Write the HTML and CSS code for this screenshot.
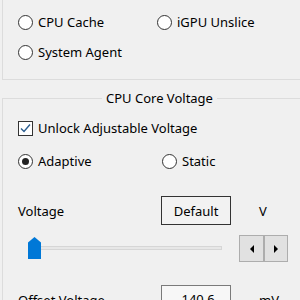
FILE: index.html
```html
<!DOCTYPE html>
<html lang="en">
<head>
    <meta charset="UTF-8">
    <title>Voltage Settings</title>
    <link rel="stylesheet" href="styles.css">
</head>
<body>
    <div class="group group-top">
        <div class="opt-grid">
            <label class="opt"><span class="radio"></span>CPU Cache</label>
            <label class="opt"><span class="radio"></span>iGPU Unslice</label>
            <label class="opt"><span class="radio"></span>System Agent</label>
        </div>
    </div>

    <div class="group group-main">
        <div class="legend">CPU Core Voltage</div>
        <label class="opt check-row">
            <span class="check">
                <svg width="13" height="13" viewBox="0 0 13 13"><path d="M2 6.5 L5 9.5 L11 2.5" fill="none" stroke="#2a5d8f" stroke-width="1.4"/></svg>
            </span>Unlock Adjustable Voltage
        </label>
        <div class="mode-row">
            <label class="opt"><span class="radio on"></span>Adaptive</label>
            <label class="opt"><span class="radio"></span>Static</label>
        </div>
        <div class="field-row">
            <span class="field-label">Voltage</span>
            <button class="btn">Default</button>
            <span class="unit">V</span>
        </div>
        <div class="slider-row">
            <div class="slider">
                <div class="track"></div>
                <div class="thumb"></div>
            </div>
            <div class="spin">
                <span class="spin-btn"><span class="tri tri-left"></span></span>
                <span class="spin-btn"><span class="tri tri-right"></span></span>
            </div>
        </div>
        <div class="field-row offset-row">
            <span class="field-label">Offset Voltage</span>
            <span class="textbox">-140.6</span>
            <span class="unit">mV</span>
        </div>
    </div>
</body>
</html>
```

FILE: styles.css
```css
body {
    margin: 0;
    width: 300px;
    height: 300px;
    overflow: hidden;
    background-color: #f0f0f0;
    font-family: "Noto Sans", "Open Sans", sans-serif;
    font-size: 13px;
    color: #000;
}
.group {
    width: 298px;
    margin-left: 2px;
    box-sizing: border-box;
    border: 1px solid #dcdcdc;
    border-right: none;
}
.group-top {
    border-top: none;
    height: 80px;
    padding: 14px 0 0 15px;
}
.opt-grid {
    display: grid;
    grid-template-columns: 139px auto;
    row-gap: 14px;
}
.opt {
    display: flex;
    align-items: center;
    height: 16px;
    white-space: nowrap;
}
.radio {
    width: 13px;
    height: 13px;
    border: 1px solid #333;
    border-radius: 50%;
    background-color: #fff;
    margin-right: 5px;
    position: relative;
    flex: none;
}
.radio.on::after {
    content: "";
    position: absolute;
    left: 3px;
    top: 3px;
    width: 7px;
    height: 7px;
    border-radius: 50%;
    background-color: #222;
}
.group-main {
    margin-top: 18px;
    height: 202px;
    border-bottom: none;
    padding: 0 0 0 15px;
    position: relative;
}
.legend {
    position: absolute;
    top: -9px;
    left: 99px;
    padding: 0 4px;
    background-color: #f0f0f0;
    line-height: 16px;
}
.check-row {
    margin-top: 21px;
}
.check {
    width: 13px;
    height: 13px;
    border: 1px solid #333;
    background-color: #fff;
    margin-right: 5px;
    display: flex;
    align-items: center;
    justify-content: center;
    flex: none;
}
.mode-row {
    display: flex;
    margin-top: 17px;
}
.mode-row .opt:first-child {
    width: 144px;
}
.field-row {
    display: flex;
    align-items: center;
    margin-top: 27px;
}
.field-label {
    width: 143px;
}
.btn {
    width: 70px;
    height: 29px;
    border: 1px solid #333;
    background-color: #f2f2f2;
    font-family: inherit;
    font-size: 13px;
    padding: 0;
}
.unit {
    margin-left: 28px;
}
.slider-row {
    display: flex;
    align-items: center;
    margin-top: 10px;
}
.slider {
    width: 204px;
    height: 27px;
    position: relative;
}
.track {
    position: absolute;
    left: 10px;
    right: 0;
    top: 11px;
    height: 2px;
    background-color: #e7e7e7;
    border: 1px solid #d6d6d6;
}
.thumb {
    position: absolute;
    left: 10px;
    top: 2px;
    width: 13px;
    height: 22px;
    background-color: #0078d7;
    clip-path: polygon(50% 0, 100% 25%, 100% 100%, 0 100%, 0 25%);
}
.spin {
    display: flex;
    margin-left: 17px;
    border: 1px solid #adadad;
    height: 25px;
}
.spin-btn {
    width: 23px;
    display: flex;
    align-items: center;
    justify-content: center;
    background-color: #e1e1e1;
}
.spin-btn + .spin-btn {
    width: 22px;
    border-left: 2px solid #adadad;
}
.tri {
    width: 0;
    height: 0;
    border-top: 4px solid transparent;
    border-bottom: 4px solid transparent;
}
.tri-left {
    border-right: 4px solid #000;
}
.tri-right {
    border-left: 4px solid #000;
}
.offset-row {
    margin-top: 23px;
}
.textbox {
    width: 68px;
    height: 27px;
    border: 1px solid #7a7a7a;
    background-color: #f7f7f7;
    text-align: center;
    line-height: 27px;
}
```
